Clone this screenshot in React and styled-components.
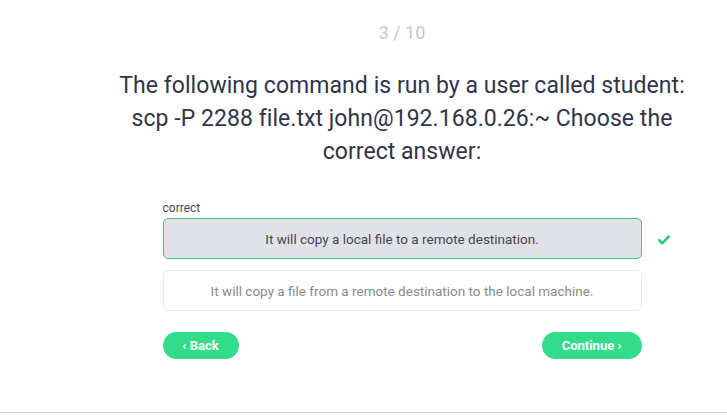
import styled, { createGlobalStyle } from "styled-components"

const GlobalStyle = createGlobalStyle`
    html, body {
        margin: 0;
        padding: 0;
        background: #ffffff;
    }
    body {
        font-family: Roboto, "Liberation Sans", sans-serif;
    }
`

const answers = [
    { text: "It will copy a local file to a remote destination.", selected: true },
    { text: "It will copy a file from a remote destination to the local machine.", selected: false },
]

export default function App() {
    return (
        <>
            <GlobalStyle />
            <Page>
                <Column>
                    <Counter>3 / 10</Counter>
                    <Question>
                        The following command is run by a user called student: scp -P 2288 file.txt john@192.168.0.26:~ Choose the correct answer:
                    </Question>
                    <Answers>
                        <Label>correct</Label>
                        {answers.map((a) => (
                            <AnswerRow key={a.text}>
                                <Answer selected={a.selected}>{a.text}</Answer>
                                {a.selected && (
                                    <Check viewBox="0 0 12 10" aria-hidden="true">
                                        <path d="M1.3 5.2 L4.4 8.2 L10.7 1.6" fill="none" stroke="#2fc872" strokeWidth="2.6" strokeLinecap="round" strokeLinejoin="round" />
                                    </Check>
                                )}
                            </AnswerRow>
                        ))}
                    </Answers>
                    <Nav>
                        <Pill width="76px">‹ Back</Pill>
                        <Pill width="100px">Continue ›</Pill>
                    </Nav>
                </Column>
            </Page>
        </>
    )
}

const Page = styled.div`
    box-sizing: border-box;
    width: 100%;
    height: 413px;
    border-bottom: 1px solid #d4d4d4;
`

const Column = styled.div`
    display: flex;
    flex-direction: column;
    align-items: center;
    padding-left: 77px;
`

const Counter = styled.div`
    margin-top: 22px;
    font-size: 18px;
    line-height: 22px;
    color: #c9c9c9;
`

const Question = styled.div`
    margin-top: 25px;
    width: 580px;
    font-size: 23px;
    letter-spacing: 0.05px;
    line-height: 33px;
    text-align: center;
    color: #33334a;
`

const Answers = styled.div`
    margin-top: 33px;
    width: 479px;
    display: flex;
    flex-direction: column;
    gap: 11px;
`

const Label = styled.div`
    font-size: 12px;
    line-height: 14px;
    color: #4a4a55;
    margin-bottom: -8px;
`

const AnswerRow = styled.div`
    position: relative;
`

const Answer = styled.div`
    box-sizing: border-box;
    height: 41px;
    display: flex;
    align-items: center;
    justify-content: center;
    border-radius: 5px;
    font-size: 13.5px;
    border: 1px solid ${(p) => (p.selected ? "#3ccb7a" : "#ececec")};
    background: ${(p) => (p.selected ? "#e1e2e7" : "#ffffff")};
    color: ${(p) => (p.selected ? "#45454f" : "#8a8a8a")};
`

const Check = styled.svg`
    position: absolute;
    right: -28px;
    top: 17px;
    width: 12px;
    height: 10px;
`

const Nav = styled.div`
    margin-top: 21px;
    width: 479px;
    display: flex;
    justify-content: space-between;
`

const Pill = styled.div`
    box-sizing: border-box;
    width: ${(p) => p.width};
    height: 27px;
    border-radius: 14px;
    background: #33dc8b;
    color: #ffffff;
    font-size: 13px;
    font-weight: 700;
    display: flex;
    align-items: center;
    justify-content: center;
`
